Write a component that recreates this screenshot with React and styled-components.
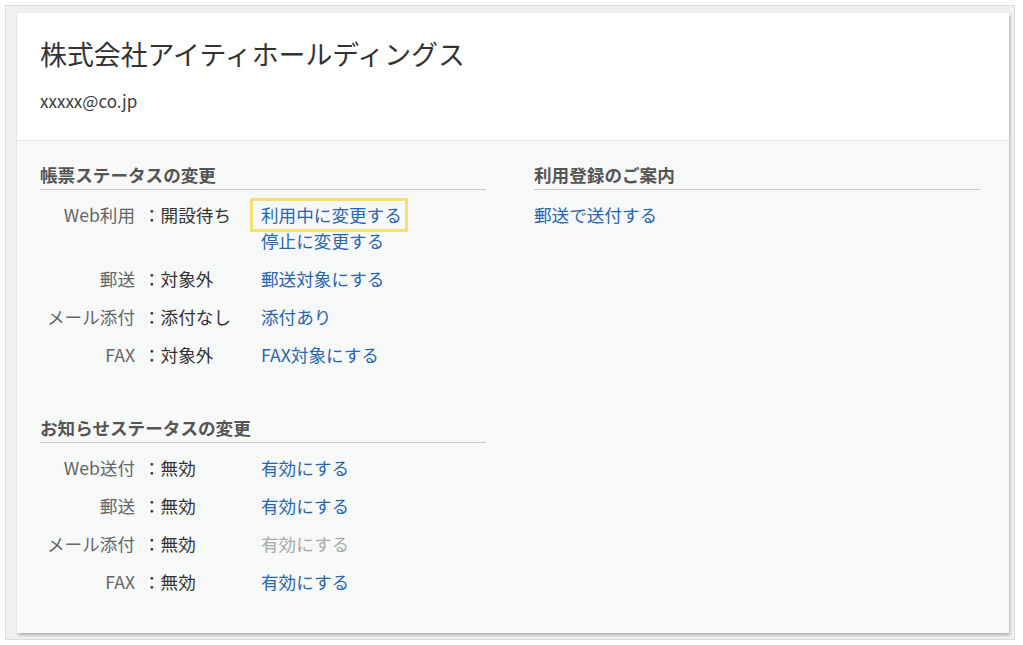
import styled, { createGlobalStyle } from "styled-components";

const GlobalStyle = createGlobalStyle`
  html, body {
    margin: 0;
    padding: 0;
    background: #ffffff;
  }
  body {
    font-family: "Noto Sans CJK JP", "Noto Sans", sans-serif;
    color: #333;
  }
`;

const Frame = styled.div`
  box-sizing: border-box;
  margin: 5px 0 0 5px;
  width: 1010px;
  height: 635px;
  border: 1px solid #dadcdc;
  background: #eff0f0;
  padding: 7px 5px 6px 11px;
  display: flex;
`;

const Card = styled.div`
  flex: 1;
  display: flex;
  flex-direction: column;
  background: #f7f9f9;
  box-shadow: 1px 2px 3px rgba(0, 0, 0, 0.28);
`;

const Header = styled.header`
  box-sizing: border-box;
  height: 128px;
  background: #ffffff;
  border-bottom: 1px solid #e4e6e6;
  padding: 23px 23px 0;
`;

const Company = styled.h1`
  margin: 0;
  font-size: 26.9px;
  line-height: 36px;
  font-weight: 400;
  color: #333;
`;

const Email = styled.div`
  margin-top: 16px;
  font-size: 17px;
  line-height: 26px;
  color: #3a3a3a;
`;

const Body = styled.div`
  display: grid;
  grid-template-columns: 446px 446px;
  column-gap: 48px;
  padding: 22px 23px 0;
`;

const Column = styled.div`
  display: flex;
  flex-direction: column;
`;

const Section = styled.section`
  margin-top: ${(p) => (p.$first ? 0 : "48px")};
`;

const SectionTitle = styled.h2`
  margin: 0;
  padding-bottom: 2px;
  border-bottom: 1px solid #c4c6c6;
  font-size: 17.6px;
  line-height: 24px;
  font-weight: 700;
  color: #555;
`;

const Rows = styled.div`
  display: flex;
  flex-direction: column;
  gap: 12px;
  margin-top: 12px;
`;

const Row = styled.div`
  display: grid;
  grid-template-columns: 95px 110px 1fr;
  column-gap: 8px;
  font-size: 17.6px;
  line-height: 26px;
`;

const Label = styled.div`
  text-align: right;
  color: #666;
  white-space: nowrap;
`;

const Value = styled.div`
  color: #333;
  white-space: nowrap;
`;

const Actions = styled.div`
  display: flex;
  flex-direction: column;
  align-items: flex-start;
`;

const Action = styled.a`
  color: ${(p) => (p.$disabled ? "#a9a9a9" : "#2866b0")};
  text-decoration: none;
  white-space: nowrap;
  cursor: ${(p) => (p.$disabled ? "default" : "pointer")};
`;

const FocusedAction = styled(Action)`
  display: inline-block;
  padding: 1px 3px 1px 8px;
  margin: -1px -3px -1px -8px;
  box-shadow: 0 0 0 3px #f3df74;
`;

const PlainLinks = styled.div`
  margin-top: 12px;
  font-size: 17.6px;
  line-height: 26px;
`;

const slipRows = [
  {
    label: "Web利用",
    value: "開設待ち",
    actions: [
      { text: "利用中に変更する", focused: true },
      { text: "停止に変更する" },
    ],
  },
  { label: "郵送", value: "対象外", actions: [{ text: "郵送対象にする" }] },
  { label: "メール添付", value: "添付なし", actions: [{ text: "添付あり" }] },
  { label: "FAX", value: "対象外", actions: [{ text: "FAX対象にする" }] },
];

const noticeRows = [
  { label: "Web送付", value: "無効", actions: [{ text: "有効にする" }] },
  { label: "郵送", value: "無効", actions: [{ text: "有効にする" }] },
  {
    label: "メール添付",
    value: "無効",
    actions: [{ text: "有効にする", disabled: true }],
  },
  { label: "FAX", value: "無効", actions: [{ text: "有効にする" }] },
];

function StatusRows({ rows }) {
  return (
    <Rows>
      {rows.map((row) => (
        <Row key={row.label}>
          <Label>{row.label}</Label>
          <Value>：{row.value}</Value>
          <Actions>
            {row.actions.map((a) =>
              a.focused ? (
                <FocusedAction key={a.text}>{a.text}</FocusedAction>
              ) : (
                <Action key={a.text} $disabled={a.disabled}>
                  {a.text}
                </Action>
              )
            )}
          </Actions>
        </Row>
      ))}
    </Rows>
  );
}

export default function App() {
  return (
    <>
      <GlobalStyle />
      <Frame>
        <Card>
          <Header>
            <Company>株式会社アイティホールディングス</Company>
            <Email>xxxxx@co.jp</Email>
          </Header>
          <Body>
            <Column>
              <Section $first>
                <SectionTitle>帳票ステータスの変更</SectionTitle>
                <StatusRows rows={slipRows} />
              </Section>
              <Section>
                <SectionTitle>お知らせステータスの変更</SectionTitle>
                <StatusRows rows={noticeRows} />
              </Section>
            </Column>
            <Column>
              <Section $first>
                <SectionTitle>利用登録のご案内</SectionTitle>
                <PlainLinks>
                  <Action>郵送で送付する</Action>
                </PlainLinks>
              </Section>
            </Column>
          </Body>
        </Card>
      </Frame>
    </>
  );
}
